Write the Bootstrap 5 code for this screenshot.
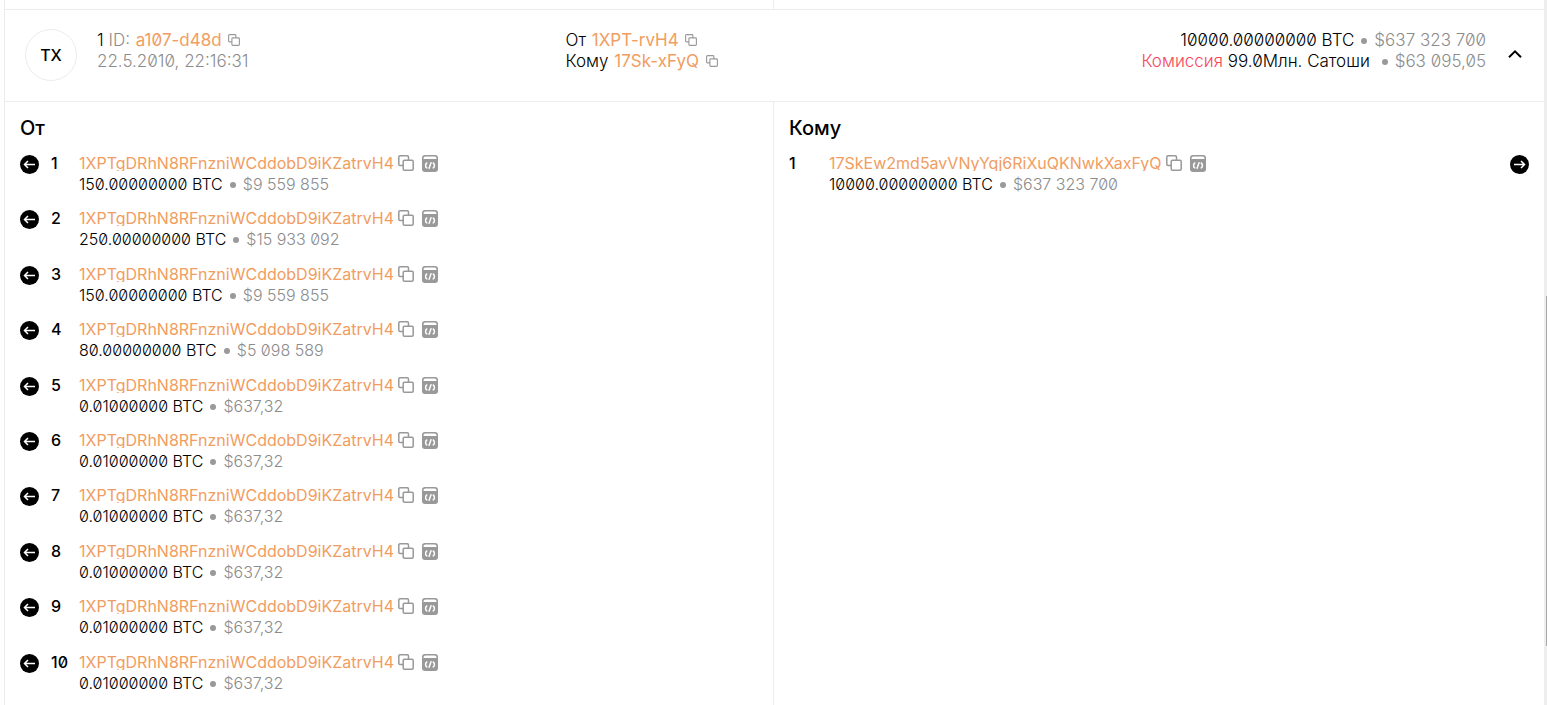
<!DOCTYPE html>
<html lang="ru">
<head>
<meta charset="utf-8">
<meta name="viewport" content="width=device-width, initial-scale=1">
<title>Транзакция a107-d48d</title>
<link href="https://cdn.jsdelivr.net/npm/bootstrap@5.3.0/dist/css/bootstrap.min.css" rel="stylesheet">
<style>
  body { font-family: Inter, "Noto Sans", sans-serif; font-size: 16px; font-weight: 300; line-height: 21px; color: #000; background: #fff; font-feature-settings: "zero"; }
  a { color: #f19d61; text-decoration: none; font-weight: 400; }
  a:hover { color: #d97f3c; }
  .page { padding: 0 1px 0 4px; }
  .line { border: 0 solid #ececec; }
  .line.border-start, .line.border-end { border-color: #ececec !important; }
  .prev { height: 9px; }
  .tx-head { padding: 19px 22px 20px 20px; border-width: 1px 0; margin-right: -1px; }
  .tx-mark { width: 52px; height: 52px; border: 1px solid #ececec; font-weight: 500; }
  .tx-text { font-size: 17px; padding-top: 1px; }
  .tx-text a { margin: 0 2px 0 1px; }
  .tx-id { flex: 0 0 37%; }
  .toggle { margin-left: 22px; }
  .muted { color: #8c8c8c; }
  .fee { color: #f7465c; }
  .dot { display: inline-block; width: 6px; height: 6px; border-radius: 50%; background: #999; vertical-align: 2px; margin: 0 7px; }
  .icon-btn { border: 0; padding: 0; background: none; color: #999; line-height: 0; display: inline-flex; }
  .pane { padding: 14px 15px 4px; }
  .pane-to { padding-right: 14px; }
  h2 { font-size: 20px; line-height: 24px; font-weight: 500; margin: 0 0 7px; }
  .rows { display: grid; grid-auto-rows: 1fr; }
  .pane-to .rows { grid-auto-rows: auto; }
  .entry { padding-top: 7px; }
  .arrow { width: 19px; height: 19px; margin-top: 1px; flex-shrink: 0; }
  .num { width: 28px; margin-left: 12px; font-weight: 500; line-height: 19px; flex-shrink: 0; }
  .pane-to .num { width: 40px; margin-left: 0; }
  .addr-line { height: 17px; margin-bottom: 3px; gap: 8px; }
  .addr { overflow: hidden; line-height: 19px; height: 17px; margin-right: -4px; }
  .addr-line .icon-btn { padding-top: 1px; height: 19px; }
  .track { width: 3px; background: #eee; }
  .thumb { width: 1px; margin-top: 296px; height: 350px; background: #a8a8a8; }
</style>
</head>
<body>
<svg width="0" height="0" class="position-absolute" aria-hidden="true">
  <symbol id="copy" viewBox="0 0 16 16"><g fill="none" stroke="currentColor" stroke-width="1.5"><rect x="5.2" y="5.2" width="10" height="10" rx="1.2"/><path d="M5.200 10.500H2A1.200 1.200 0 0 1 .8 9.300V2A1.200 1.200 0 0 1 2 .8H9.300A1.200 1.200 0 0 1 10.500 2V5.200"/></g></symbol>
  <symbol id="code" viewBox="0 0 16 17"><rect width="16" height="17" rx="3" fill="currentColor"/><path d="M1.500 4V3.500q0-2 2-2h9q2 0 2 2V4z" fill="#fff"/><path d="M4.800 8Q3.600 8.600 3.600 10.400T4.800 12.900M11.200 8q1.200.6 1.200 2.400T11.200 12.900M9 7.800l-1.900 5.400" fill="none" stroke="#fff" stroke-width="1.500" stroke-linecap="round"/></symbol>
  <symbol id="left" viewBox="0 0 19 19"><circle cx="9.500" cy="9.500" r="9.500"/><path d="M15 9.500H4.500M8 6L4.500 9.500 8 13" fill="none" stroke="#fff" stroke-width="1.500"/></symbol>
  <symbol id="right" viewBox="0 0 19 19"><circle cx="9.500" cy="9.500" r="9.500"/><path d="M4 9.500H14.500M11 6l3.500 3.500L11 13" fill="none" stroke="#fff" stroke-width="1.500"/></symbol>
</svg>
<div class="d-flex min-vh-100">
  <main class="page flex-fill d-flex flex-column">
    <div class="prev d-flex line border-start">
      <div class="w-50 line border-end"></div>
    </div>
    <header class="tx-head line border-start d-flex align-items-start">
      <div class="d-flex flex-fill">
        <div class="tx-id d-flex">
          <div class="tx-mark rounded-circle d-flex align-items-center justify-content-center flex-shrink-0">TX</div>
          <div class="tx-text ms-3 ps-1">
            <div>1 <span class="muted">ID:</span> <a href="#">a107-d48d</a> <button class="icon-btn" aria-label="Копировать"><svg width="12" height="12"><use href="#copy"/></svg></button></div>
            <div class="muted">22.5.2010, 22:16:31</div>
          </div>
        </div>
        <div class="tx-text">
          <div>От <a href="#">1XPT-rvH4</a> <button class="icon-btn" aria-label="Копировать"><svg width="12" height="12"><use href="#copy"/></svg></button></div>
          <div>Кому <a href="#">17Sk-xFyQ</a> <button class="icon-btn" aria-label="Копировать"><svg width="12" height="12"><use href="#copy"/></svg></button></div>
        </div>
        <div class="tx-text ms-auto text-end">
          <div>10000.00000000 BTC<span class="dot"></span><span class="muted">$637 323 700</span></div>
          <div><span class="fee">Комиссия</span> 99.0Млн. Сатоши <span class="dot"></span><span class="muted">$63 095,05</span></div>
        </div>
      </div>
      <button class="toggle icon-btn text-black align-self-center" aria-label="Свернуть"><svg width="14" height="10" viewBox="0 0 14 10"><path d="M1 7.200L7 1.400l6 5.800" fill="none" stroke="currentColor" stroke-width="2"/></svg></button>
    </header>
    <div class="flex-fill d-flex line border-start">
      <section class="pane w-50 line border-end d-flex flex-column">
        <h2>От</h2>
        <div class="rows flex-fill" id="inputs"></div>
      </section>
      <section class="pane pane-to w-50">
        <h2>Кому</h2>
        <div class="rows" id="outputs"></div>
      </section>
    </div>
  </main>
  <div class="track d-flex justify-content-end"><div class="thumb"></div></div>
</div>
<script src="https://cdn.jsdelivr.net/npm/bootstrap@5.3.0/dist/js/bootstrap.bundle.min.js"></script>
<script>
  const from = '1XPTgDRhN8RFnzniWCddobD9iKZatrvH4';
  const small = ['0.01000000', '$637,32'];
  const inputs = [['150.00000000', '$9 559 855'], ['250.00000000', '$15 933 092'], ['150.00000000', '$9 559 855'],
    ['80.00000000', '$5 098 589'], small, small, small, small, small, small];
  const details = (address, [btc, usd]) => `
    <div class="flex-fill">
      <div class="addr-line d-flex">
        <a class="addr" href="#">${address}</a>
        <button class="icon-btn" aria-label="Копировать"><svg width="16" height="16"><use href="#copy"/></svg></button>
        <button class="icon-btn" aria-label="Скрипт"><svg width="16" height="17"><use href="#code"/></svg></button>
      </div>
      <div>${btc} BTC<span class="dot"></span><span class="muted">${usd}</span></div>
    </div>`;
  document.getElementById('inputs').innerHTML = inputs.map((sum, i) => `
    <div class="entry d-flex align-items-start"><svg class="arrow"><use href="#left"/></svg><div class="num">${i + 1}</div>${details(from, sum)}</div>`).join('');
  document.getElementById('outputs').innerHTML = `
    <div class="entry d-flex align-items-start"><div class="num">1</div>${details('17SkEw2md5avVNyYqj6RiXuQKNwkXaxFyQ', ['10000.00000000', '$637 323 700'])}<svg class="arrow"><use href="#right"/></svg></div>`;
</script>
</body>
</html>
